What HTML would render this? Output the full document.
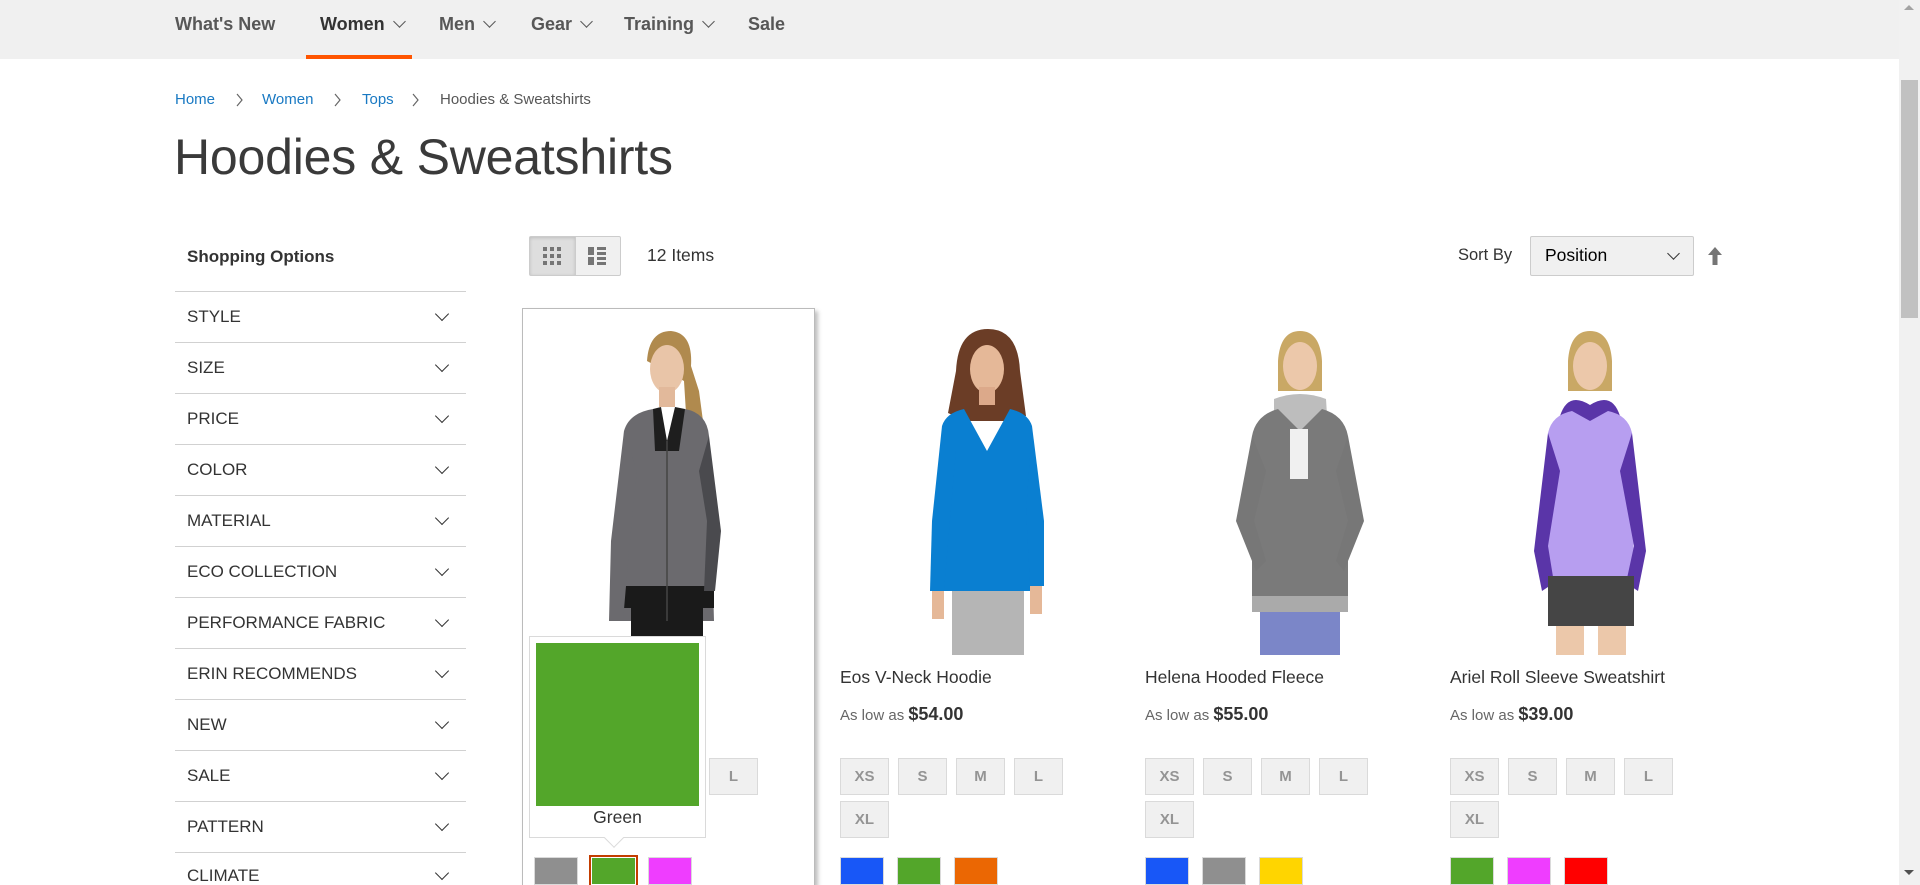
<!DOCTYPE html>
<html><head><meta charset="utf-8"><style>
*{margin:0;padding:0;box-sizing:border-box}
html{width:1920px;height:885px;overflow:hidden}
body{width:1920px;height:885px;overflow:hidden;background:#fff;font-family:"Liberation Sans",sans-serif;color:#333;position:relative}
.a{position:absolute;white-space:nowrap}
.nav{left:0;top:0;width:1900px;height:59px;background:#f0f0f0}
.ni{top:14px;font-size:18px;font-weight:bold;color:#575757}
.chev{display:inline-block;width:9px;height:9px;border-right:1.5px solid #575757;border-bottom:1.5px solid #575757;transform:rotate(45deg);margin-left:10px;position:relative;top:-4px}
.bc{top:91px;font-size:15px;color:#1979c3}
.bs{top:93px}
.fl{left:175px;width:291px;height:1px;background:#d1d1d1}
.ft{left:187px;font-size:17px;color:#333}
.fc{left:437px;width:10px;height:10px;border-right:1.6px solid #333;border-bottom:1.6px solid #333;transform:rotate(45deg)}
.sz{width:49px;height:37px;background:#f0f0f0;border:1px solid #dadada;font-size:15px;font-weight:bold;color:#949494;text-align:center;line-height:35px}
.sw{width:44px;height:28px;border:1px solid #dadada}
.pn{font-size:17.5px;color:#333;top:667px}
.pp{font-size:15px;color:#666;top:704px}
.pp b{font-size:18px;color:#333}
</style></head><body>
<div class="a nav"></div>
<div class="a ni" style="left:175px">What's New</div>
<div class="a ni" style="left:320px;color:#333">Women<span class="chev"></span></div>
<div class="a" style="left:306px;top:55px;width:106px;height:4px;background:#ff5501"></div>
<div class="a ni" style="left:439px">Men<span class="chev"></span></div>
<div class="a ni" style="left:531px">Gear<span class="chev"></span></div>
<div class="a ni" style="left:624px">Training<span class="chev"></span></div>
<div class="a ni" style="left:748px">Sale</div>

<div class="a bc" style="left:175px">Home</div>
<svg class="a bs" style="left:236px" width="8" height="14"><path d="M1 1 L6 7 L1 13" fill="none" stroke="#666" stroke-width="1.2"/></svg>
<div class="a bc" style="left:262px">Women</div>
<svg class="a bs" style="left:334px" width="8" height="14"><path d="M1 1 L6 7 L1 13" fill="none" stroke="#666" stroke-width="1.2"/></svg>
<div class="a bc" style="left:362px">Tops</div>
<svg class="a bs" style="left:412px" width="8" height="14"><path d="M1 1 L6 7 L1 13" fill="none" stroke="#666" stroke-width="1.2"/></svg>
<div class="a bc" style="left:440px;color:#575757">Hoodies &amp; Sweatshirts</div>

<div class="a" style="left:174px;top:128px;font-size:50px;font-weight:300;color:#3a3a3a;letter-spacing:-0.2px">Hoodies &amp; Sweatshirts</div>

<div class="a" style="left:187px;top:247px;font-size:17px;font-weight:bold;color:#333">Shopping Options</div>
<div class="a fl" style="top:291px"></div>
<div class="a ft" style="top:307px">STYLE</div><div class="a fc" style="top:309px"></div><div class="a fl" style="top:342px"></div>
<div class="a ft" style="top:358px">SIZE</div><div class="a fc" style="top:360px"></div><div class="a fl" style="top:393px"></div>
<div class="a ft" style="top:409px">PRICE</div><div class="a fc" style="top:411px"></div><div class="a fl" style="top:444px"></div>
<div class="a ft" style="top:460px">COLOR</div><div class="a fc" style="top:462px"></div><div class="a fl" style="top:495px"></div>
<div class="a ft" style="top:511px">MATERIAL</div><div class="a fc" style="top:513px"></div><div class="a fl" style="top:546px"></div>
<div class="a ft" style="top:562px">ECO COLLECTION</div><div class="a fc" style="top:564px"></div><div class="a fl" style="top:597px"></div>
<div class="a ft" style="top:613px">PERFORMANCE FABRIC</div><div class="a fc" style="top:615px"></div><div class="a fl" style="top:648px"></div>
<div class="a ft" style="top:664px">ERIN RECOMMENDS</div><div class="a fc" style="top:666px"></div><div class="a fl" style="top:699px"></div>
<div class="a ft" style="top:715px">NEW</div><div class="a fc" style="top:717px"></div><div class="a fl" style="top:750px"></div>
<div class="a ft" style="top:766px">SALE</div><div class="a fc" style="top:768px"></div><div class="a fl" style="top:801px"></div>
<div class="a ft" style="top:817px">PATTERN</div><div class="a fc" style="top:819px"></div><div class="a fl" style="top:852px"></div>
<div class="a ft" style="top:866px">CLIMATE</div><div class="a fc" style="top:868px"></div>

<!-- toolbar -->
<div class="a" style="left:529px;top:236px;width:92px;height:40px;border:1px solid #ccc;border-radius:2px;background:#f0f0f0"></div>
<div class="a" style="left:530px;top:237px;width:45px;height:38px;background:#dedede;box-shadow:inset 0 1px 3px rgba(0,0,0,.15)"></div>
<svg class="a" style="left:543px;top:247px" width="18" height="18"><g fill="#757575"><rect x="0" y="0" width="4" height="4"/><rect x="7" y="0" width="4" height="4"/><rect x="14" y="0" width="4" height="4"/><rect x="0" y="7" width="4" height="4"/><rect x="7" y="7" width="4" height="4"/><rect x="14" y="7" width="4" height="4"/><rect x="0" y="14" width="4" height="4"/><rect x="7" y="14" width="4" height="4"/><rect x="14" y="14" width="4" height="4"/></g></svg>
<div class="a" style="left:575px;top:237px;width:1px;height:38px;background:#ccc"></div>
<svg class="a" style="left:588px;top:247px" width="18" height="18"><g fill="#757575"><rect x="0" y="0" width="6" height="8"/><rect x="9" y="0" width="9" height="3"/><rect x="9" y="5" width="9" height="3"/><rect x="0" y="10" width="6" height="8"/><rect x="9" y="10" width="9" height="3"/><rect x="9" y="15" width="9" height="3"/></g></svg>
<div class="a" style="left:647px;top:245px;font-size:17.5px;color:#333">12 Items</div>

<div class="a" style="left:1458px;top:246px;font-size:16.5px;color:#333">Sort By</div>
<div class="a" style="left:1530px;top:236px;width:164px;height:40px;border:1px solid #ccc;border-radius:2px;background:#f0f0f0"></div>
<div class="a" style="left:1545px;top:245px;font-size:17.5px;color:#000">Position</div>
<div class="a" style="left:1669px;top:249px;width:9px;height:9px;border-right:1.6px solid #333;border-bottom:1.6px solid #333;transform:rotate(45deg)"></div>
<svg class="a" style="left:1707px;top:247px" width="16" height="18"><path d="M8 0 L15 8 L10.5 8 L10.5 18 L5.5 18 L5.5 8 L1 8 Z" fill="#757575"/></svg>

<!-- card 1 border -->
<div class="a" style="left:522px;top:308px;width:293px;height:577px;border:1px solid #bbb;border-bottom:none;box-shadow:3px 3px 4px rgba(0,0,0,.25)"></div>

<!-- product images -->
<svg class="a" style="left:549px;top:321px" width="240" height="334" viewBox="0 0 240 334">
<path d="M98 40 Q100 10 122 10 Q144 12 142 45 L150 70 L158 130 L150 150 L140 140 L135 60 Z" fill="#b08a4e"/>
<ellipse cx="118" cy="48" rx="17" ry="24" fill="#e9c5a8"/>
<rect x="110" y="66" width="16" height="20" fill="#e2b99b"/>
<path d="M75 110 Q80 92 104 88 L118 120 L136 88 Q158 92 160 115 L165 300 L70 300 Z" fill="#6b6a6e"/>
<path d="M104 88 L112 86 L118 120 L126 86 L136 88 L130 130 L106 130 Z" fill="#1e1e1e"/>
<rect x="70" y="265" width="95" height="22" fill="#1a1a1a"/>
<path d="M75 110 L62 220 L60 300 L74 300 L80 230 L88 150 Z" fill="#6b6a6e"/>
<path d="M160 115 L172 210 L166 270 L155 270 L158 200 L150 150 Z" fill="#4a4a4e"/>
<rect x="82" y="287" width="72" height="47" fill="#1a1a1a"/>
<line x1="118" y1="120" x2="118" y2="300" stroke="#444" stroke-width="1.5"/>
</svg>
<svg class="a" style="left:866px;top:321px" width="240" height="334" viewBox="0 0 240 334">
<path d="M90 50 Q92 8 122 8 Q152 8 154 50 L160 95 L140 100 L100 100 L82 92 Z" fill="#6b3d26"/>
<ellipse cx="121" cy="48" rx="17" ry="24" fill="#e5b898"/>
<rect x="113" y="66" width="16" height="18" fill="#dca98a"/>
<path d="M76 105 Q80 92 98 88 L121 130 L144 88 Q162 92 166 105 L168 270 L78 270 Z" fill="#0a7fd1"/>
<path d="M76 105 L66 200 L64 270 L78 270 L84 200 L90 130 Z" fill="#0a7fd1"/>
<path d="M166 105 L178 200 L178 265 L164 265 L160 190 Z" fill="#0a7fd1"/>
<rect x="66" y="270" width="12" height="28" fill="#e5b898"/><rect x="164" y="265" width="12" height="28" fill="#e5b898"/>
<rect x="86" y="270" width="72" height="64" fill="#b5b5b5"/>
</svg>
<svg class="a" style="left:1178px;top:321px" width="240" height="334" viewBox="0 0 240 334">
<path d="M100 40 Q102 10 122 10 Q142 10 144 40 L144 70 L100 70 Z" fill="#c9a865"/>
<ellipse cx="122" cy="45" rx="17" ry="24" fill="#ecc8aa"/>
<path d="M96 78 Q122 68 148 78 L150 110 L96 110 Z" fill="#bdbdbd"/>
<path d="M74 115 Q78 94 100 88 L122 110 L144 88 Q166 94 170 115 L170 290 L74 290 Z" fill="#7a7a7a"/>
<path d="M74 115 L58 200 L78 250 L88 240 L76 200 L88 150 Z" fill="#777"/>
<path d="M170 115 L186 200 L166 250 L158 240 L170 200 L158 150 Z" fill="#777"/>
<rect x="74" y="275" width="96" height="16" fill="#aaa"/>
<rect x="82" y="291" width="80" height="43" fill="#7b86c8"/>
<rect x="112" y="108" width="18" height="50" fill="#f0f0f0"/>
</svg>
<svg class="a" style="left:1468px;top:321px" width="240" height="334" viewBox="0 0 240 334">
<path d="M100 40 Q102 10 122 10 Q142 10 144 40 L144 70 L100 70 Z" fill="#c9a865"/>
<ellipse cx="122" cy="45" rx="17" ry="24" fill="#ecc8aa"/>
<path d="M92 95 Q100 70 122 84 Q144 70 152 95 L154 110 L90 110 Z" fill="#5a35a8"/>
<path d="M80 112 Q84 94 104 90 L122 100 L140 90 Q160 94 164 112 L166 255 L78 255 Z" fill="#b79ef0"/>
<path d="M80 112 L66 230 L74 270 L86 262 L80 225 L92 150 Z" fill="#5a35a8"/>
<path d="M164 112 L178 230 L170 270 L158 262 L166 225 L152 150 Z" fill="#5a35a8"/>
<rect x="80" y="255" width="86" height="50" fill="#454545"/>
<rect x="88" y="305" width="28" height="29" fill="#ecc8aa"/><rect x="130" y="305" width="28" height="29" fill="#ecc8aa"/>
</svg>

<!-- card 1 text -->
<div class="a pn" style="left:535px">Ryan Hooded Fleece</div>
<div class="a pp" style="left:535px">As low as <b>$52.00</b></div>
<div class="a sz" style="left:709px;top:758px">L</div>
<div class="a sw" style="left:534px;top:857px;background:#8f8f8f"></div>
<div class="a" style="left:589px;top:855px;width:49px;height:30px;border:2px solid #c33d00;border-bottom:none;background:#53a62a;box-shadow:inset 0 0 0 1px #fff"></div>
<div class="a sw" style="left:648px;top:857px;background:#ef3dff"></div>
<!-- tooltip -->
<div class="a" style="left:529px;top:636px;width:177px;height:202px;background:#fff;border:1px solid #dadada"></div>
<div class="a" style="left:536px;top:643px;width:163px;height:163px;background:#53a62a"></div>
<div class="a" style="left:529px;top:807px;width:177px;text-align:center;font-size:17.5px;color:#333">Green</div>
<div class="a" style="left:607px;top:831px;width:14px;height:14px;background:#fff;border-right:1px solid #dadada;border-bottom:1px solid #dadada;transform:rotate(45deg)"></div>

<!-- cards 2-4 -->
<div class="a pn" style="left:840px">Eos V-Neck Hoodie</div>
<div class="a pp" style="left:840px">As low as <b>$54.00</b></div>
<div class="a pn" style="left:1145px">Helena Hooded Fleece</div>
<div class="a pp" style="left:1145px">As low as <b>$55.00</b></div>
<div class="a pn" style="left:1450px">Ariel Roll Sleeve Sweatshirt</div>
<div class="a pp" style="left:1450px">As low as <b>$39.00</b></div>

<div class="a sz" style="left:840px;top:758px">XS</div><div class="a sz" style="left:898px;top:758px">S</div><div class="a sz" style="left:956px;top:758px">M</div><div class="a sz" style="left:1014px;top:758px">L</div><div class="a sz" style="left:840px;top:801px">XL</div>
<div class="a sz" style="left:1145px;top:758px">XS</div><div class="a sz" style="left:1203px;top:758px">S</div><div class="a sz" style="left:1261px;top:758px">M</div><div class="a sz" style="left:1319px;top:758px">L</div><div class="a sz" style="left:1145px;top:801px">XL</div>
<div class="a sz" style="left:1450px;top:758px">XS</div><div class="a sz" style="left:1508px;top:758px">S</div><div class="a sz" style="left:1566px;top:758px">M</div><div class="a sz" style="left:1624px;top:758px">L</div><div class="a sz" style="left:1450px;top:801px">XL</div>

<div class="a sw" style="left:840px;top:857px;background:#1857f7"></div><div class="a sw" style="left:897px;top:857px;background:#53a62a"></div><div class="a sw" style="left:954px;top:857px;background:#eb6703"></div>
<div class="a sw" style="left:1145px;top:857px;background:#1857f7"></div><div class="a sw" style="left:1202px;top:857px;background:#8f8f8f"></div><div class="a sw" style="left:1259px;top:857px;background:#ffd500"></div>
<div class="a sw" style="left:1450px;top:857px;background:#53a62a"></div><div class="a sw" style="left:1507px;top:857px;background:#ef3dff"></div><div class="a sw" style="left:1564px;top:857px;background:#ff0000"></div>

<!-- scrollbar -->
<div class="a" style="left:1899px;top:0;width:21px;height:885px;background:#f1f1f1"></div>
<div class="a" style="left:1901px;top:80px;width:17px;height:238px;background:#c1c1c1"></div>
<div class="a" style="left:1904px;top:870px;width:0;height:0;border-left:5px solid transparent;border-right:5px solid transparent;border-top:5px solid #505050"></div>
<div class="a" style="left:1904px;top:5px;width:0;height:0;border-left:5px solid transparent;border-right:5px solid transparent;border-bottom:5px solid #a3a3a3"></div>
</body></html>
